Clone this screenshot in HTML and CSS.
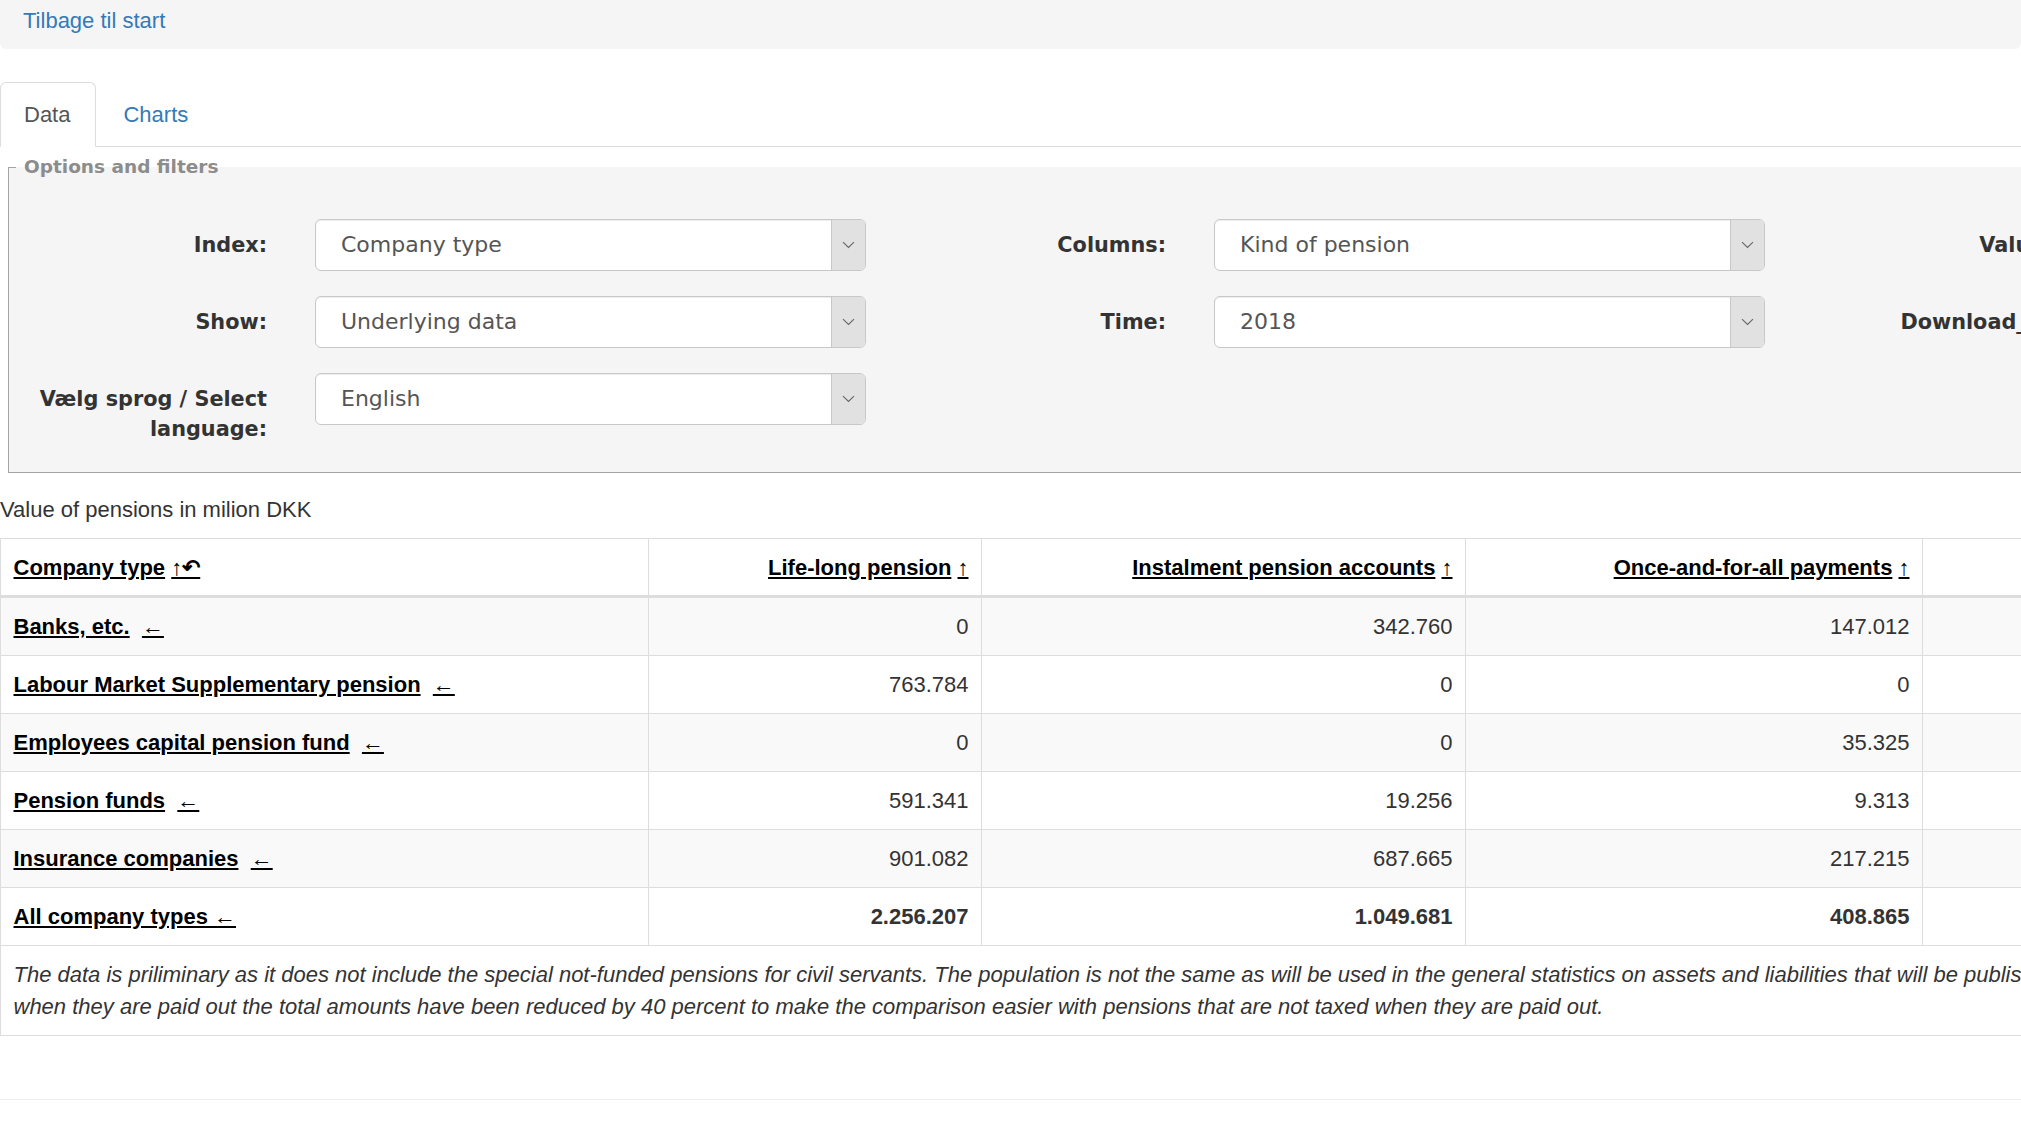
FILE: index.html
```html
<!DOCTYPE html>
<html lang="en">
<head>
<meta charset="utf-8">
<title>Value of pensions</title>
<link rel="stylesheet" href="styles.css">
</head>
<body>
<nav class="topbar"><a class="back-link" href="#">Tilbage til start</a></nav>

<ul class="tabs">
  <li class="tab active"><a href="#">Data</a></li>
  <li class="tab"><a href="#">Charts</a></li>
</ul>

<section class="filters">
  <div class="filters-legend"><span class="legend-tick"></span><span class="legend-text">Options and filters</span></div>
  <div class="filters-body">
    <div class="filter-col">
      <div class="form-group">
        <label class="form-label">Index:</label>
        <div class="select"><span class="select-value">Company type</span><span class="select-btn"><svg width="13" height="8" viewBox="0 0 13 8"><path d="M1 1.2l5.5 5.3L12 1.2" fill="none" stroke="#666" stroke-width="1.1"/></svg></span></div>
      </div>
      <div class="form-group">
        <label class="form-label">Show:</label>
        <div class="select"><span class="select-value">Underlying data</span><span class="select-btn"><svg width="13" height="8" viewBox="0 0 13 8"><path d="M1 1.2l5.5 5.3L12 1.2" fill="none" stroke="#666" stroke-width="1.1"/></svg></span></div>
      </div>
      <div class="form-group">
        <label class="form-label">Vælg sprog / Select language:</label>
        <div class="select"><span class="select-value">English</span><span class="select-btn"><svg width="13" height="8" viewBox="0 0 13 8"><path d="M1 1.2l5.5 5.3L12 1.2" fill="none" stroke="#666" stroke-width="1.1"/></svg></span></div>
      </div>
    </div>
    <div class="filter-col">
      <div class="form-group">
        <label class="form-label">Columns:</label>
        <div class="select"><span class="select-value">Kind of pension</span><span class="select-btn"><svg width="13" height="8" viewBox="0 0 13 8"><path d="M1 1.2l5.5 5.3L12 1.2" fill="none" stroke="#666" stroke-width="1.1"/></svg></span></div>
      </div>
      <div class="form-group">
        <label class="form-label">Time:</label>
        <div class="select"><span class="select-value">2018</span><span class="select-btn"><svg width="13" height="8" viewBox="0 0 13 8"><path d="M1 1.2l5.5 5.3L12 1.2" fill="none" stroke="#666" stroke-width="1.1"/></svg></span></div>
      </div>
    </div>
    <div class="filter-col">
      <div class="form-group">
        <label class="form-label">Values:</label>
        <div class="select"><span class="select-value"></span><span class="select-btn"></span></div>
      </div>
      <div class="form-group">
        <label class="form-label">Download_csv</label>
        <div class="select"><span class="select-value"></span><span class="select-btn"></span></div>
      </div>
    </div>
  </div>
</section>

<div class="table-caption">Value of pensions in milion DKK</div>
<table class="data-table">
  <colgroup>
    <col class="col-name"><col class="col-life"><col class="col-inst"><col class="col-once"><col class="col-rest">
  </colgroup>
  <thead>
    <tr>
      <th class="name"><a class="sort-link" href="#">Company type</a> <a class="sort-link" href="#">↑↶</a></th>
      <th><a class="sort-link" href="#">Life-long pension</a> <a class="sort-link" href="#">↑</a></th>
      <th><a class="sort-link" href="#">Instalment pension accounts</a> <a class="sort-link" href="#">↑</a></th>
      <th><a class="sort-link" href="#">Once-and-for-all payments</a> <a class="sort-link" href="#">↑</a></th>
      <th></th>
    </tr>
  </thead>
  <tbody>
    <tr><td class="name"><a class="sort-link" href="#">Banks, etc.</a> &nbsp;<a class="sort-link" href="#">←</a></td><td>0</td><td>342.760</td><td>147.012</td><td></td></tr>
    <tr><td class="name"><a class="sort-link" href="#">Labour Market Supplementary pension</a> &nbsp;<a class="sort-link" href="#">←</a></td><td>763.784</td><td>0</td><td>0</td><td></td></tr>
    <tr><td class="name"><a class="sort-link" href="#">Employees capital pension fund</a> &nbsp;<a class="sort-link" href="#">←</a></td><td>0</td><td>0</td><td>35.325</td><td></td></tr>
    <tr><td class="name"><a class="sort-link" href="#">Pension funds</a> &nbsp;<a class="sort-link" href="#">←</a></td><td>591.341</td><td>19.256</td><td>9.313</td><td></td></tr>
    <tr><td class="name"><a class="sort-link" href="#">Insurance companies</a> &nbsp;<a class="sort-link" href="#">←</a></td><td>901.082</td><td>687.665</td><td>217.215</td><td></td></tr>
    <tr class="total"><td class="name"><a class="sort-link" href="#">All company types ←</a></td><td>2.256.207</td><td>1.049.681</td><td>408.865</td><td></td></tr>
  </tbody>
  <tfoot>
    <tr><td class="note" colspan="5">The data is priliminary as it does not include the special not-funded pensions for civil servants. The population is not the same as will be used in the general statistics on assets and liabilities that will be published later. As pensions are taxed<br>when they are paid out the total amounts have been reduced by 40 percent to make the comparison easier with pensions that are not taxed when they are paid out.</td></tr>
  </tfoot>
</table>
<hr class="rule">
</body>
</html>
```

FILE: styles.css
```css
html, body {
  margin: 0;
  padding: 0;
}
body {
  font-family: "Liberation Sans", Arial, sans-serif;
  font-size: 22px;
  line-height: 1.42857;
  color: #333;
  background: #fff;
  overflow: hidden;
}
a {
  text-decoration: none;
}

/* top bar */
.topbar {
  background: #f5f5f5;
  border-radius: 0 0 6px 6px;
  padding: 5px 23px 13px;
  line-height: 31px;
}
.back-link {
  color: #337ab7;
}

/* tabs */
.tabs {
  list-style: none;
  margin: 33px 0 0;
  padding: 0;
  display: flex;
  gap: 3px;
  border-bottom: 1px solid #ddd;
}
.tab a {
  display: block;
  padding: 16px 25px 16px 23px;
  line-height: 31px;
  border: 1px solid transparent;
  border-radius: 6px 6px 0 0;
  margin-bottom: -1px;
  color: #337ab7;
}
.tab.active a {
  color: #555;
  background: #fff;
  border-color: #ddd;
  border-bottom-color: transparent;
}

/* filters */
.filters {
  display: flow-root;
  margin: 20px 0 9px 8px;
  background: #f5f5f5;
  border-left: 1px solid #a3a3a3;
  border-bottom: 1px solid #a3a3a3;
}
.filters-legend {
  display: flex;
  align-items: center;
  height: 24px;
  margin-top: -12px;
}
.legend-tick {
  width: 7px;
  height: 0;
  border-top: 1px solid #a3a3a3;
  margin-right: 8px;
}
.legend-text {
  font-family: "DejaVu Sans", Verdana, sans-serif;
  font-weight: bold;
  font-size: 18.5px;
  line-height: 24px;
  color: #8c8c8c;
}
.filters-body {
  display: flex;
  padding: 40px 0 3px;
}
.filter-col {
  flex: 0 0 899px;
}
.form-group {
  display: flex;
  align-items: flex-start;
  margin-bottom: 25px;
}
.form-label {
  flex: 0 0 258px;
  margin-right: 48px;
  text-align: right;
  font-family: "DejaVu Sans", Verdana, sans-serif;
  font-weight: bold;
  font-size: 20.8px;
  line-height: 30px;
  padding-top: 11px;
  color: #333;
}
.select {
  flex: 0 0 551px;
  box-sizing: border-box;
  height: 52px;
  display: flex;
  background: #fff;
  border: 1px solid #c8c8c8;
  border-radius: 6px;
  box-shadow: inset 0 1px 1px rgba(0, 0, 0, 0.075);
  overflow: hidden;
}
.select-value {
  flex: 1;
  padding-left: 25px;
  font-family: "DejaVu Sans", Verdana, sans-serif;
  font-size: 22px;
  line-height: 50px;
  color: #555;
}
.select-btn {
  flex: 0 0 33px;
  background: #e1e1e1;
  border-left: 1px solid #c8c8c8;
  display: flex;
  align-items: center;
  justify-content: center;
}

/* table */
.table-caption {
  padding: 12px 0 13px;
  line-height: 31.4px;
  color: #333;
}
.data-table {
  border-collapse: collapse;
  table-layout: fixed;
  width: 2322px;
  border: 1px solid #ddd;
}
.col-name { width: 648px; }
.col-life { width: 333px; }
.col-inst { width: 484px; }
.col-once { width: 457px; }
.col-rest { width: 400px; }
.data-table th {
  padding: 12.5px;
  line-height: 31px;
  text-align: right;
  vertical-align: bottom;
  border: 1px solid #ddd;
  border-bottom: 3px solid #ddd;
  font-weight: bold;
}
.data-table td {
  padding: 12.5px;
  line-height: 32px;
  text-align: right;
  border: 1px solid #ddd;
  color: #333;
}
.data-table th.name,
.data-table td.name {
  text-align: left;
}
.data-table tbody tr:nth-child(odd) {
  background: #f9f9f9;
}
.data-table tr.total td {
  font-weight: bold;
}
.sort-link {
  color: #000;
  font-weight: bold;
  text-decoration: underline;
}
.data-table td.note {
  text-align: left;
  font-style: italic;
  white-space: nowrap;
}
.rule {
  margin: 63px 0 0;
  border: 0;
  border-top: 1px solid #eee;
}
```
